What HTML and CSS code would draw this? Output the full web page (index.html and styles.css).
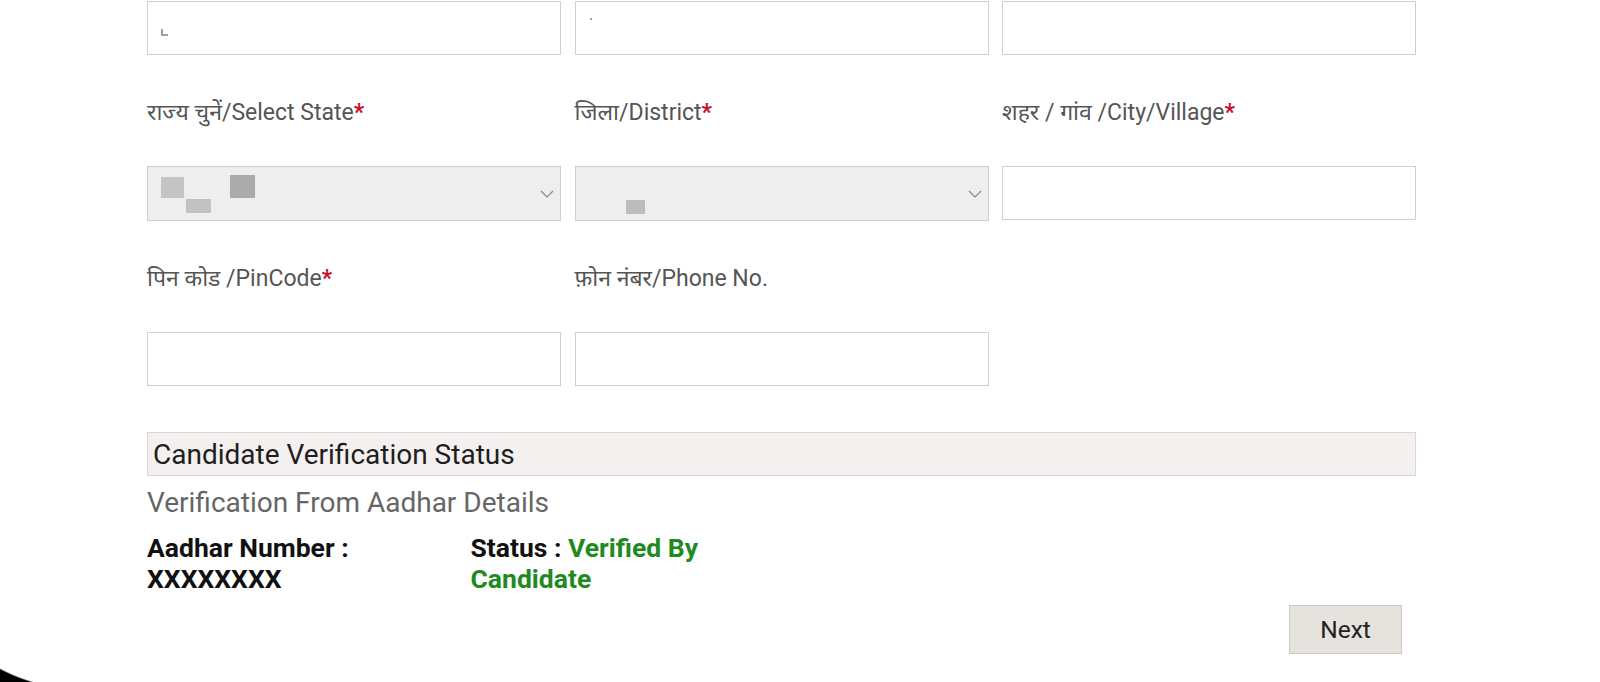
FILE: index.html
```html
<!DOCTYPE html>
<html lang="hi">
<head>
<meta charset="utf-8">
<title>Candidate Form</title>
<link rel="stylesheet" href="styles.css">
</head>
<body>
<div class="page">
  <div class="grid">
    <div class="field first">
      <div class="input"><span class="mark m1"></span><span class="mark m2"></span></div>
    </div>
    <div class="field first">
      <div class="input"><span class="mark m3"></span></div>
    </div>
    <div class="field first">
      <div class="input"></div>
    </div>

    <div class="field">
      <label class="lbl">राज्य चुनें/Select State<span class="req">*</span></label>
      <div class="select">
        <span class="blk b1"></span><span class="blk b2"></span><span class="blk b3"></span>
        <svg class="chev" width="14" height="8" viewBox="0 0 14 8"><path d="M1 1 L7 7 L13 1" fill="none" stroke="#8a8a8a" stroke-width="1.2"/></svg>
      </div>
    </div>
    <div class="field">
      <label class="lbl">जिला/District<span class="req">*</span></label>
      <div class="select">
        <span class="blk b4"></span>
        <svg class="chev" width="14" height="8" viewBox="0 0 14 8"><path d="M1 1 L7 7 L13 1" fill="none" stroke="#8a8a8a" stroke-width="1.2"/></svg>
      </div>
    </div>
    <div class="field">
      <label class="lbl">शहर / गांव /City/Village<span class="req">*</span></label>
      <div class="input"></div>
    </div>

    <div class="field">
      <label class="lbl">पिन कोड /PinCode<span class="req">*</span></label>
      <div class="input"></div>
    </div>
    <div class="field">
      <label class="lbl">फ़ोन नंबर/Phone No.</label>
      <div class="input"></div>
    </div>
  </div>

  <div class="section-head">Candidate Verification Status</div>
  <div class="sub">Verification From Aadhar Details</div>
  <div class="verify">
    <div class="vcol aadhar">Aadhar Number : XXXXXXXX</div>
    <div class="vcol status">Status : <span class="ok">Verified By Candidate</span></div>
  </div>
  <div class="actions">
    <button class="btn">Next</button>
  </div>
</div>
<div class="corner"></div>
</body>
</html>
```
FILE: styles.css
```css
html, body {
  margin: 0;
  padding: 0;
  background: #fff;
  height: 682px;
  overflow: hidden;
}
body {
  font-family: Roboto, "Noto Sans", "DejaVu Sans", sans-serif;
  color: #555;
  position: relative;
}
.page {
  width: 1269px;
  margin-left: 147px;
  padding-top: 1px;
}
.grid {
  display: grid;
  grid-template-columns: 414px 414px 414px;
  column-gap: 13.5px;
}
.field {
  display: flex;
  flex-direction: column;
}
.lbl {
  display: block;
  font-size: 23px;
  line-height: 30px;
  margin-top: 43px;
  margin-bottom: 38px;
  color: #555;
  white-space: nowrap;
}
.req {
  color: #c8102e;
  font-weight: bold;
}
.input, .select {
  box-sizing: border-box;
  height: 54px;
  border: 1px solid #cfcfcf;
  background: #fff;
  position: relative;
}
.select {
  background: #eeeeee;
  height: 55px;
}
.chev {
  position: absolute;
  right: 6px;
  top: 23px;
}
.blk {
  position: absolute;
  background: #bdbdbd;
}
.b1 { left: 13px; top: 10px; width: 23px; height: 21px; background: #c4c4c4; }
.b2 { left: 82px; top: 8px; width: 25px; height: 23px; background: #ababab; }
.b3 { left: 38px; top: 32px; width: 25px; height: 14px; background: #c2c2c2; }
.b4 { left: 50px; top: 33px; width: 19px; height: 14px; background: #bcbcbc; }
.mark {
  position: absolute;
  background: #a0a0a0;
}
.m1 { left: 13px; top: 27px; width: 2px; height: 7px; }
.m2 { left: 13px; top: 32px; width: 7px; height: 2px; }
.m3 { left: 14px; top: 16px; width: 2px; height: 2px; }

.section-head {
  box-sizing: border-box;
  margin-top: 46px;
  height: 44px;
  background: #f3f0ef;
  border: 1px solid #d9d6d4;
  padding-left: 5px;
  font-size: 28px;
  line-height: 44px;
  color: #1e1e1e;
}
.sub {
  font-size: 28px;
  line-height: 34px;
  margin-top: 10px;
  color: #666;
}
.verify {
  display: flex;
  margin-top: 12px;
  font-weight: bold;
  font-size: 26.5px;
  line-height: 31px;
  color: #111;
}
.vcol.aadhar {
  width: 300px;
  margin-right: 23.5px;
}
.vcol.status {
  width: 260px;
}
.ok {
  color: #1f8a1f;
}
.actions {
  display: flex;
  justify-content: flex-end;
  padding-right: 14px;
  margin-top: 11px;
}
.btn {
  width: 113px;
  height: 49px;
  background: #e6e3de;
  border: 1px solid #cdcac5;
  border-radius: 0;
  font-family: Roboto, "Noto Sans", sans-serif;
  font-size: 24.5px;
  color: #222;
  padding: 0;
}
.corner {
  position: absolute;
  left: 0;
  bottom: 0;
  width: 40px;
  height: 16px;
  background: radial-gradient(circle 171px at 80px -148px, transparent 170px, #000 171.5px);
}
```
